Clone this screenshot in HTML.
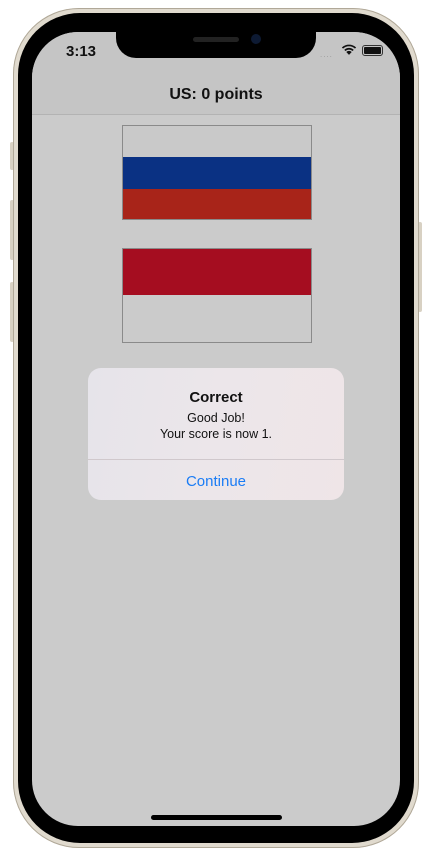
<!DOCTYPE html>
<html><head><style>
body{margin:0;width:432px;height:855px;background:#fff;position:relative;overflow:hidden;font-family:"Liberation Sans",sans-serif}
.frame{position:absolute;left:13px;top:8px;width:406px;height:840px;border-radius:66px;background:#e0dace;box-shadow:inset 0 0 0 1px #b0a898}
.bezel{position:absolute;left:18px;top:13px;width:396px;height:830px;border-radius:62px;background:#000}
.screen{position:absolute;left:32px;top:32px;width:368px;height:794px;border-radius:46px;background:#cbcbcb;overflow:hidden}
.hdr{position:absolute;left:0;top:0;width:368px;height:82px;background:#c5c5c5;border-bottom:1px solid #b3b3b3}
.notch{position:absolute;left:116px;top:32px;width:200px;height:26px;background:#000;border-radius:0 0 20px 20px}
.btn{position:absolute;background:#d8d1c3;border-radius:2px}
.flag{position:absolute;left:90px;width:188px;height:93px;border:1px solid #8a8a8a}
.alert{position:absolute;left:56px;top:336px;width:256px;height:132px;border-radius:13px;background:linear-gradient(100deg,#e6e4ea 0%,#ece6ea 50%,#efe5e7 100%)}
</style></head><body>
<div class="btn" style="left:10px;top:142px;width:4px;height:28px"></div>
<div class="btn" style="left:10px;top:200px;width:4px;height:60px"></div>
<div class="btn" style="left:10px;top:282px;width:4px;height:60px"></div>
<div class="btn" style="left:418px;top:222px;width:4px;height:90px"></div>
<div class="frame"></div>
<div class="bezel"></div>
<div class="screen">
 <div class="hdr"></div>
 <div style="position:absolute;left:34px;top:11px;font-size:15px;font-weight:bold;color:#111">3:13</div>
 <div style="position:absolute;left:288px;top:18px;font-size:8px;color:#999;letter-spacing:1px">....</div>
 <svg style="position:absolute;left:308px;top:11px" width="18" height="13" viewBox="0 0 16 12"><path d="M8 11 L5.5 8.3 A3.6 3.6 0 0 1 10.5 8.3Z M3.6 6.3 A6.4 6.4 0 0 1 12.4 6.3 L11.3 7.4 A4.9 4.9 0 0 0 4.7 7.4Z M1.4 4.1 A9.6 9.6 0 0 1 14.6 4.1 L13.5 5.2 A8 8 0 0 0 2.5 5.2Z" fill="#111"/></svg>
 <div style="position:absolute;left:330px;top:13px;width:19px;height:9px;border:1px solid #333;border-radius:3px"><div style="margin:1px;height:7px;background:#111;border-radius:1px"></div></div>
 <div style="position:absolute;left:0;top:54px;width:368px;text-align:center;font-size:16px;font-weight:bold;color:#111">US: 0 points</div>
 <div class="flag" style="top:93px;background:linear-gradient(#c9c9c9 0 31px,#0a3183 31px 63px,#a82419 63px)"></div>
 <div class="flag" style="top:216px;background:linear-gradient(#a50d20 0 46px,#cbcbcb 46px)"></div>
 <div class="alert">
  <div style="position:absolute;top:21px;width:256px;text-align:center;font-size:15px;font-weight:bold;color:#111">Correct</div>
  <div style="position:absolute;top:42px;width:256px;text-align:center;font-size:12.5px;line-height:16px;color:#111">Good Job!<br>Your score is now 1.</div>
  <div style="position:absolute;top:91px;width:256px;height:1px;background:#d0c8cc"></div>
  <div style="position:absolute;top:105px;width:256px;text-align:center;font-size:15px;color:#1a7cf5">Continue</div>
 </div>
 <div style="position:absolute;left:119px;top:783px;width:131px;height:5px;border-radius:3px;background:#000"></div>
</div>
<div class="notch"></div>
<div style="position:absolute;left:193px;top:37px;width:46px;height:5px;border-radius:3px;background:#222"></div>
<div style="position:absolute;left:251px;top:34px;width:10px;height:10px;border-radius:50%;background:#0d1a33"></div>
</body></html>
